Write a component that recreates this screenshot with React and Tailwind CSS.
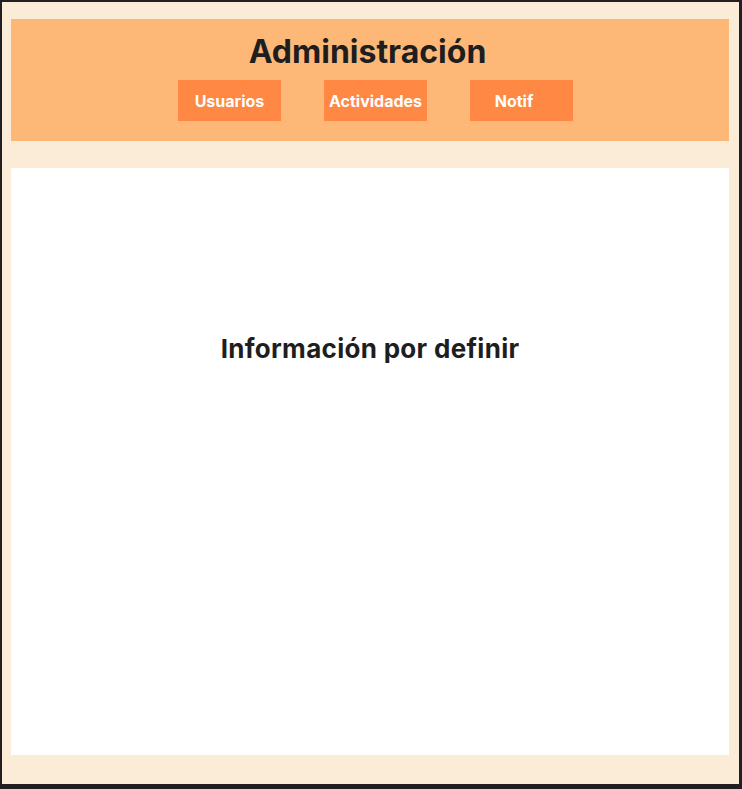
import React from 'react';

const tabs = [
  { label: 'Usuarios', extra: '' },
  { label: 'Actividades', extra: '' },
  { label: 'Notif', extra: 'pr-[15px]' },
];

export default function App() {
  return (
    <div
      className="h-[789px] w-[742px] bg-[#faecd7] border-t-2 border-l-2 border-r-[3px] border-b-[5px] border-[#231f20] pt-[17px] pl-[9px] pr-[10px] pb-[29px] flex flex-col gap-[27px]"
      style={{ fontFamily: 'Inter, "Liberation Sans", sans-serif' }}
    >
      {/* Header */}
      <div className="h-[122px] bg-[#fdb878] flex flex-col items-center pt-[14px]">
        <h1 className="text-[32px] leading-[38px] font-bold text-[#1e1e1e] -ml-[5px]">Administración</h1>
        <div className="mt-[9px] ml-[11px] flex gap-[43px]">
          {tabs.map((t) => (
            <button
              key={t.label}
              className={`w-[103px] h-[41px] bg-[#ff8844] text-white text-[16px] font-bold flex items-center justify-center ${t.extra}`}
            >
              {t.label}
            </button>
          ))}
        </div>
      </div>

      {/* Content */}
      <div className="flex-1 bg-white flex justify-center pt-[165px]">
        <p className="text-[26px] leading-[32px] font-bold tracking-[0.3px] text-[#1e1e1e]">Información por definir</p>
      </div>
    </div>
  );
}
